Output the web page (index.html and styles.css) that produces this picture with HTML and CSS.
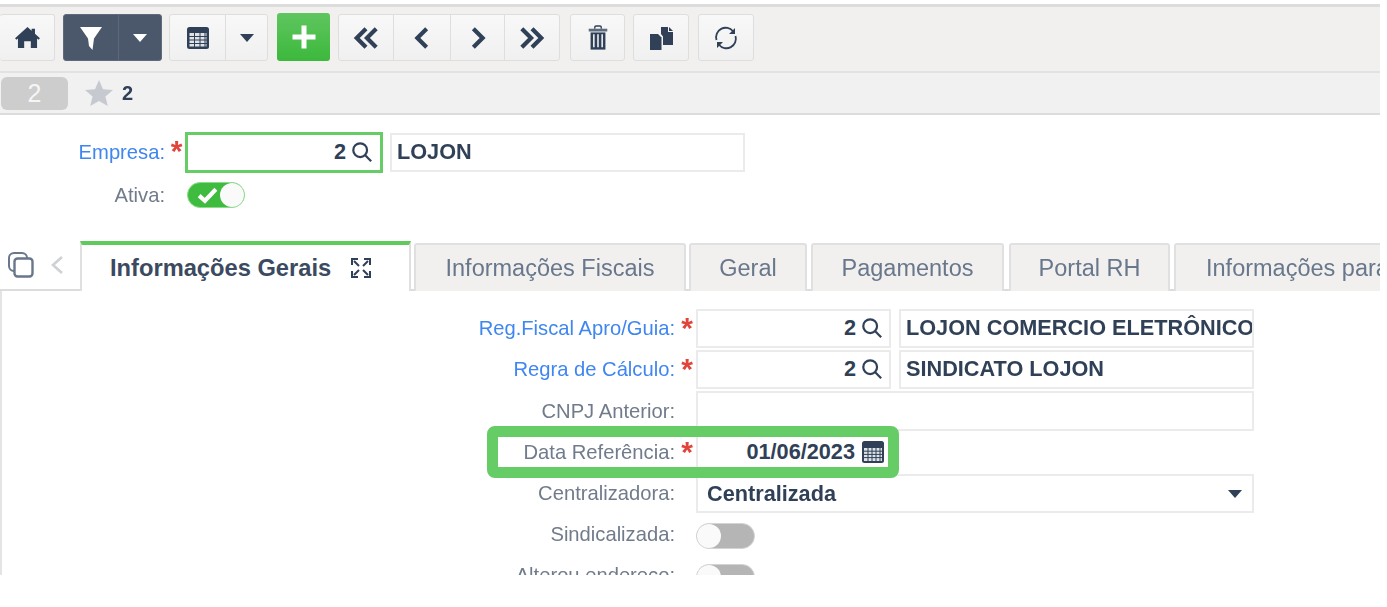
FILE: index.html
```html
<!DOCTYPE html>
<html lang="pt-BR">
<head>
<meta charset="utf-8">
<title>Empresa</title>
<link rel="stylesheet" href="styles.css">
</head>
<body>
<div class="stage">
<div class="app">
  <div class="toolbar">
    <div class="group first">
      <button class="btn w54"><svg class="ic" viewBox="0 0 26 24"><path d="M13 2 L17 5.6V3.5h3.2v5L25 12.8l-1.4 1.4L22.2 13v9h-6v-6.5h-6.4V22h-6v-9l-1.4 1.2L1 12.8z" /></svg></button>
    </div>
    <div class="group dark ml1">
      <button class="btn w55"><svg class="ic big" viewBox="0 0 24 26"><path d="M1 2h22L15 13.5 13.5 25 10 21 9 13.5z" fill="#fff"/></svg></button>
      <button class="btn w42"><svg class="caret" viewBox="0 0 14 8"><path d="M0 0h14L7 8z" fill="#fff"/></svg></button>
    </div>
    <div class="group">
      <button class="btn w56"><svg class="ic big" viewBox="0 0 26 26"><rect x="2" y="2" width="22" height="22" rx="2.5" fill="#2f4057"/><path d="M4.5 8h17v13.500h-17z" fill="#dfe2e6"/><path d="M4 11.500h18M4 15h18M4 18.500h18M9.500 8v14M15 8v14M20 8v14" stroke="#2f4057" stroke-width="1"/></svg></button>
      <button class="btn w41"><svg class="caret" viewBox="0 0 14 8"><path d="M0 0h14L7 8z"/></svg></button>
    </div>
    <button class="btn add ml2"><svg class="ic big" viewBox="0 0 26 26"><path d="M10.500 1.500h5v9h9v5h-9v9h-5v-9h-9v-5h9z" fill="#fff"/></svg></button>
    <div class="group ml1">
      <button class="btn w55"><svg class="ic big" viewBox="0 0 28 26"><path d="M14 3 4 13l10 10M25 3 15 13l10 10" fill="none" stroke="#2f4057" stroke-width="4.500"/></svg></button>
      <button class="btn w57"><svg class="ic big" viewBox="0 0 28 26"><path d="M19 3 9 13l10 10" fill="none" stroke="#2f4057" stroke-width="4.500"/></svg></button>
      <button class="btn w54"><svg class="ic big" viewBox="0 0 28 26"><path d="M9 3l10 10L9 23" fill="none" stroke="#2f4057" stroke-width="4.500"/></svg></button>
      <button class="btn w54"><svg class="ic big" viewBox="0 0 28 26"><path d="M3 3l10 10L3 23M14 3l10 10-10 10" fill="none" stroke="#2f4057" stroke-width="4.500"/></svg></button>
    </div>
    <div class="group ml3">
      <button class="btn w53"><svg class="ic big" viewBox="0 0 24 28"><path d="M8.500 4V2.500Q8.500 1 10 1h4q1.500 0 1.500 1.500V4" fill="none" stroke="#2f4057" stroke-width="1.500"/><path d="M2 4h20v3H2z" fill="#5d6a7c"/><path d="M4 8h16v18.500H4z" fill="#2f4057"/><path d="M7.500 10v14M12 10v14M16.500 10v14" stroke="#e6e7e9" stroke-width="1.800"/></svg></button>
    </div>
    <div class="group ml1">
      <button class="btn w54"><svg class="ic big" viewBox="0 0 26 26"><path d="M2 9h8l3.500 3.500V25H2z"/><path d="M13 2h7v5h5v13h-10v-8.500l-2-2.500z"/><path d="M21 2l4 4h-4z"/></svg></button>
    </div>
    <div class="group ml2">
      <button class="btn w54"><svg class="ic big" viewBox="0 0 26 26"><path d="M3.500 15A9.500 9.500 0 0 1 20 6.300M22.500 11A9.500 9.500 0 0 1 6 19.700" fill="none" stroke="#2f4057" stroke-width="1.800"/><path d="M22 3v6h-6zM4 23v-6h6z"/></svg></button>
    </div>
  </div>

  <div class="statusbar">
    <span class="pill">2</span>
    <svg class="star" viewBox="0 0 28 26"><path d="M14 0l4 9.300 10 .8-7.600 6.500 2.400 9.400L14 21l-8.800 5 2.400-9.400L0 10.100l10-.8z"/></svg>
    <b class="count">2</b>
  </div>

  <div class="head-form">
    <label class="lbl link">Empresa:</label>
    <span class="req">*</span>
    <div class="field focus num">2<svg class="lupa" viewBox="0 0 24 24"><circle cx="10" cy="10" r="7.500"/><path d="M15.500 15.500 22 22"/></svg></div>
    <div class="field text desc">LOJON</div>
    <label class="lbl active-lbl">Ativa:</label>
    <span></span>
    <div class="toggle on"><svg class="check" viewBox="0 0 16 14"><path d="M1.500 7.500 6 11.500 14.500 2.500" fill="none" stroke="#fff" stroke-width="3.200"/></svg><i></i></div>
  </div>

  <div class="tabs">
    <div class="tab-tools">
      <svg class="copyicon" viewBox="0 0 28 28"><rect x="2" y="2" width="18" height="18" rx="5" fill="none" stroke="#68778b" stroke-width="2"/><rect x="7.500" y="7.500" width="18" height="18" rx="3" fill="#fff" stroke="#68778b" stroke-width="2.400"/></svg>
      <svg class="prev" viewBox="0 0 14 20"><path d="M12 2 3 10l9 8" fill="none" stroke="#ced1d5" stroke-width="2.600"/></svg>
    </div>
    <div class="tab current">Informações Gerais
      <svg class="expand" viewBox="0 0 20 20"><path d="M1 7V1h6M13 1h6v6M1 13v6h6M13 19h6v-6M3 3l5 5M17 3l-5 5M3 17l5-5M17 17l-5-5" fill="none" stroke="#2f4057" stroke-width="2"/></svg>
    </div>
    <div class="tab t1">Informações Fiscais</div>
    <div class="tab t2">Geral</div>
    <div class="tab t3">Pagamentos</div>
    <div class="tab t4">Portal RH</div>
    <div class="tab t5">Informações para</div>
  </div>

  <div class="panel">
    <div class="grid">
      <label class="lbl link">Reg.Fiscal Apro/Guia:</label><span class="req">*</span>
      <div class="field num">2<svg class="lupa" viewBox="0 0 24 24"><circle cx="10" cy="10" r="7.500"/><path d="M15.500 15.500 22 22"/></svg></div>
      <div class="field text cut desc2">LOJON COMERCIO ELETRÔNICO LTDA</div>

      <label class="lbl link">Regra de Cálculo:</label><span class="req">*</span>
      <div class="field num">2<svg class="lupa" viewBox="0 0 24 24"><circle cx="10" cy="10" r="7.500"/><path d="M15.500 15.500 22 22"/></svg></div>
      <div class="field text desc2">SINDICATO LOJON</div>

      <label class="lbl">CNPJ Anterior:</label><span></span>
      <div class="field wide"></div>

      <label class="lbl">Data Referência:</label><span class="req">*</span>
      <div class="field num">01/06/2023<svg class="cal" viewBox="0 0 24 24"><rect x="1" y="1" width="22" height="22" rx="2.500" fill="#2f4057"/><path d="M3 8h18v13H3z" fill="#dfe2e6"/><path d="M3 11.200h18M3 14.400h18M3 17.600h18M7 8v13M11 8v13M15 8v13M19 8v13" stroke="#2f4057" stroke-width="1"/></svg></div>
      <span></span>

      <label class="lbl">Centralizadora:</label><span></span>
      <div class="field wide select text">Centralizada<svg class="caret" viewBox="0 0 14 8"><path d="M0 0h14L7 8z"/></svg></div>

      <label class="lbl">Sindicalizada:</label><span></span>
      <div class="toggle"><i></i></div><span></span>

      <label class="lbl">Alterou endereço:</label><span></span>
      <div class="toggle"><i></i></div><span></span>
    </div>
  </div>
</div>
<div class="highlight"></div>
</div>
</body>
</html>
```
FILE: styles.css
```css
* { box-sizing: border-box; }
html, body { margin: 0; background: #fff; }
body { font-family: "Liberation Sans", Arial, sans-serif; color: #2f4057; }
.stage { position: relative; width: 1387px; height: 607px; overflow: hidden; }
.app { width: 1380px; height: 575px; padding-top: 4px; overflow: hidden; filter: blur(.6px); }

.toolbar { height: 69px; display: flex; gap: 7px; align-items: flex-start; padding-top: 7px; background: #f1f0ef; border-top: 3px solid #dcdcdc; border-bottom: 2px solid #e2e2e2; }
.ml1 { margin-left: 1px; } .ml2 { margin-left: 2px; } .ml3 { margin-left: 3px; }
.group { display: flex; height: 47px; border: 1px solid #dedede; border-radius: 3px; background: linear-gradient(#f8f8f8, #f0f0f0); }
.group.first { border-left: 0; }
.btn { height: 100%; padding: 0; border: 0; border-right: 1px solid #dedede; background: none; display: flex; align-items: center; justify-content: center; }
.btn:last-child { border-right: 0; }
.w41 { width: 41px; } .w42 { width: 42px; } .w53 { width: 53px; } .w54 { width: 54px; } .w55 { width: 55px; } .w56 { width: 56px; } .w57 { width: 57px; }
.dark { background: #4b586b; border-color: #5f6a7a; }
.dark .btn { border-right-color: #5d6879; }
.dark .btn:last-child { border-right: 0; }
.add { width: 53px; height: 48px; margin-top: -1px; border: 0; border-radius: 3px; background: linear-gradient(#5fc65f, #3cb83c); }
.ic { width: 26px; height: 26px; fill: #2f4057; }
.caret { width: 14px; height: 8px; fill: #2f4057; }
.first .ic { width: 27px; height: 25px; }

.statusbar { height: 42px; display: flex; align-items: center; background: #f1f1f1; border-bottom: 2px solid #dcdcdc; padding-left: 1px; }
.pill { width: 67px; height: 33px; display: flex; align-items: center; justify-content: center; border-radius: 6px; background: #cdcdcd; color: #f5f5f5; font-size: 25px; }
.star { width: 28px; height: 26px; margin-left: 17px; fill: #c6c9cf; }
.count { margin-left: 9px; font-size: 20px; }

.head-form { height: 126px; display: grid; grid-template-columns: 165px 20px 198px 362px; grid-template-rows: 41px 26px; row-gap: 9px; align-content: start; padding-top: 17px; }
.lbl { display: flex; align-items: center; justify-content: flex-end; font-size: 20.200px; color: #707b8b; white-space: nowrap; }
.link { color: #3f86f0; }
.req { color: #e0443a; font-size: 30px; font-weight: 700; line-height: 30px; text-align: center; padding: 4px 0 0 3px; height: 34px; overflow: hidden; }
.field { height: 39px; border: 2px solid #ebebeb; background: #fff; padding-bottom: 2px; display: flex; align-items: center; font-size: 21.700px; font-weight: 700; color: #2f4057; }
.num { justify-content: flex-end; padding-right: 6px; gap: 5px; }
.focus { height: 41px; border: 3px solid #66cc66; padding-right: 7px; }
.text { padding-left: 5px; }
.desc { margin: 1px 0 0 7px; }
.desc2 { margin-left: 8px; }
.lupa { width: 22px; height: 22px; fill: none; stroke: #2f4057; stroke-width: 2.400; }
.cal { width: 24px; height: 24px; margin: 0 -2px 0 1px; }
.cut { overflow: hidden; white-space: nowrap; }
.toggle { position: relative; width: 58px; height: 26px; border-radius: 13px; background: #b5b5b5; border: 1px solid #d4d4d4; }
.toggle i { position: absolute; left: 0; top: 0; width: 24px; height: 24px; border-radius: 50%; background: #fafafa; }
.toggle.on { background: #3fbb3f; border-color: #8cdc8c; margin-left: 2px; }
.toggle.on i { left: 32px; }
.check { position: absolute; left: 9px; top: 3px; width: 21px; height: 18px; }

.tabs { height: 50px; display: flex; align-items: flex-end; overflow: hidden; background: linear-gradient(transparent 48px, #dcdcdc 48px); }
.tab-tools { flex: none; width: 80px; height: 100%; display: flex; align-items: center; gap: 15px; padding-left: 7px; background: #fff; border-bottom: 2px solid #dcdcdc; }
.copyicon { width: 28px; height: 28px; }
.prev { width: 14px; height: 20px; }
.tab { height: 48px; display: flex; align-items: center; justify-content: center; flex: none; font-size: 23.500px; color: #68778b; background: #f1f0ef; border: 2px solid #e0e0e0; border-bottom: 0; border-radius: 3px 3px 0 0; white-space: nowrap; }
.current { width: 331px; height: 50px; margin-right: 3px; justify-content: flex-start; padding-left: 28px; background: #fff; border-top: 4px solid #5fcb5f; border-radius: 0; font-size: 23.700px; font-weight: 700; color: #3b4a60; gap: 20px; }
.expand { width: 20px; height: 20px; }
.t1 { width: 272px; margin-right: 3px; }
.t2 { width: 118px; margin-right: 4px; }
.t3 { width: 193px; margin-right: 5px; }
.t4 { width: 161px; margin-right: 4px; }
.t5 { width: 240px; justify-content: flex-start; padding-left: 30px; }

.panel { height: 285px; border-left: 2px solid #e4e4e4; padding-top: 18px; }
.grid { display: grid; grid-template-columns: 673px 21px 195px 363px; grid-template-rows: 39px 39px 40px 39px 39px 39px 39px; row-gap: 2px; }
.wide { grid-column: span 2; width: 558px; height: 100%; }
.select { justify-content: space-between; padding: 0 10px 0 9px; }
.grid > .toggle { width: 59px; height: 26px; margin-top: 8px; }
.highlight { position: absolute; left: 487px; top: 426px; width: 412px; height: 52px; border: 11px solid #66cc66; border-radius: 8px; }
```
